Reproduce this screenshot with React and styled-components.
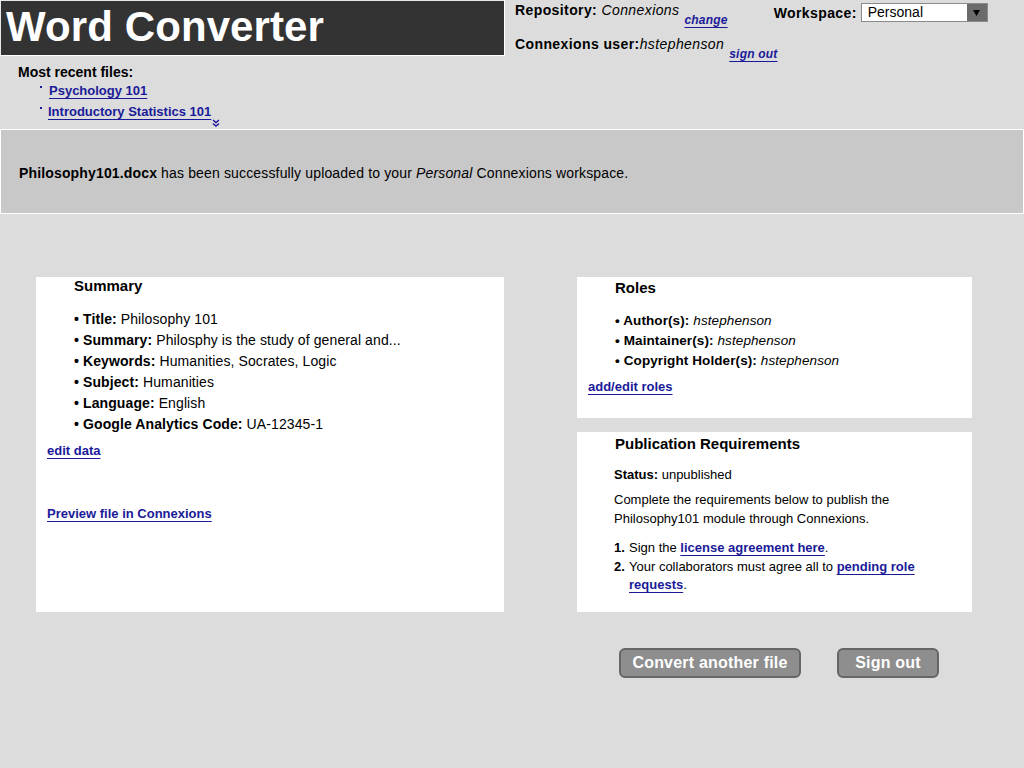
import React from "react";
import styled, { createGlobalStyle } from "styled-components";

const GlobalStyle = createGlobalStyle`
  html, body {
    margin: 0;
    padding: 0;
    background: #dcdcdc;
  }
  body {
    font-family: "Liberation Sans", Arial, Helvetica, sans-serif;
    color: #000;
  }
`;

const Page = styled.div`
  width: 1024px;
  min-height: 768px;
  background: #dcdcdc;
`;

const Top = styled.header`
  display: flex;
  gap: 10px;
`;

const LeftTop = styled.div`
  width: 505px;
`;

const TitleBar = styled.div`
  height: 54px;
  box-sizing: content-box;
  background: #333333;
  border: 1px solid #ffffff;
  border-top-color: #e8e8e8;
  border-left-color: #e8e8e8;
  display: flex;
  align-items: center;
  padding-left: 5px;

  h1 {
    margin: 0 0 3px 0;
    color: #ffffff;
    font-size: 42px;
    font-weight: bold;
    letter-spacing: 0.1px;
    line-height: 1;
  }
`;

const Recent = styled.div`
  padding: 8px 0 0 18px;
  height: 65px;

  h3 {
    margin: 0;
    font-size: 14px;
    line-height: 17px;
  }
`;

const RecentList = styled.ul`
  list-style: none;
  margin: 0;
  padding: 0 0 0 22px;
  position: relative;
`;

const RecentItem = styled.li`
  position: relative;
  padding-left: ${(p) => p.indent}px;
  height: 21px;
  line-height: 19px;
  font-size: 13px;

  &::before {
    content: "";
    position: absolute;
    left: 0;
    top: 5px;
    width: 2px;
    height: 2px;
    background: #1a1a99;
  }
`;

const Link = styled.a`
  color: #1a1a99;
  font-weight: bold;
  font-size: ${(p) => p.size || 13}px;
  font-style: ${(p) => (p.italic ? "italic" : "normal")};
  text-decoration: underline;
  text-underline-offset: 3px;
  text-decoration-thickness: 1px;
  cursor: pointer;
`;

const More = styled.span`
  position: absolute;
  left: 194px;
  top: 38px;
  display: flex;
  width: 8px;
  height: 8px;
`;

const RightTop = styled.div`
  padding-top: 2px;
  display: flex;
  flex-direction: column;
  gap: 9px;
`;

const InfoRow = styled.div`
  display: flex;
  align-items: flex-start;
  font-size: 14px;
  line-height: 16px;
  letter-spacing: 0.4px;
  white-space: nowrap;
`;

const LowLink = styled.span`
  margin-top: ${(p) => p.drop}px;
  margin-left: ${(p) => p.gap}px;
  line-height: 14px;
  letter-spacing: 0.2px;
`;

const Workspace = styled.div`
  display: flex;
  align-items: center;
  margin-left: 46px;
  margin-top: 2px;
  gap: 4px;
`;

const Select = styled.div`
  width: 125px;
  height: 17px;
  background: #ffffff;
  border: 1px solid #8a8a8a;
  display: flex;
  align-items: stretch;
  font-size: 14px;
  letter-spacing: 0;
  margin-top: -1px;

  span {
    flex: 1;
    padding-left: 6px;
    line-height: 17px;
  }
`;

const SelectArrow = styled.div`
  width: 20px;
  background: #6b6b6b;
  display: flex;
  align-items: center;
  justify-content: center;
`;

const Banner = styled.div`
  height: 80px;
  background: #c8c8c8;
  border: 1px solid #ffffff;
  display: flex;
  align-items: center;
  padding: 3px 0 0 18px;
  font-size: 14px;
  letter-spacing: 0.15px;
`;

const Main = styled.main`
  display: grid;
  grid-template-columns: 468px 395px;
  column-gap: 73px;
  padding: 63px 0 0 36px;
`;

const Card = styled.section`
  background: #ffffff;
  height: ${(p) => p.h}px;
  box-sizing: border-box;
  padding: ${(p) => p.top}px 11px 0 11px;
`;

const CardTitle = styled.h2`
  margin: 0 0 0 27px;
  font-size: 15px;
  line-height: 18px;
  font-weight: bold;
`;

const DataList = styled.ul`
  list-style: none;
  margin: ${(p) => p.mt}px 0 0 27px;
  padding: 0;
  font-size: ${(p) => p.fs}px;
  line-height: ${(p) => p.lh}px;
  letter-spacing: 0.1px;

  li::before {
    content: "• ";
    font-weight: bold;
  }
`;

const CardLink = styled.div`
  margin-top: ${(p) => p.mt}px;
  line-height: 16px;
`;

const RightCol = styled.div`
  display: flex;
  flex-direction: column;
  gap: 14px;
`;

const Status = styled.p`
  margin: 13px 0 0 26px;
  font-size: 13px;
  line-height: 18px;
`;

const Para = styled.p`
  margin: 6px 0 0 26px;
  font-size: 13px;
  line-height: 19px;
  width: 300px;
`;

const Steps = styled.ol`
  list-style: none;
  margin: 11px 0 0 26px;
  padding: 0;
  font-size: 13px;
  line-height: 18.5px;

  li {
    display: flex;
  }
  li > b {
    width: 15px;
    flex: none;
  }
  li > span {
    width: 300px;
  }
`;

const Buttons = styled.div`
  grid-column: 2;
  display: flex;
  gap: 36px;
  padding: 36px 0 0 42px;
`;

const Button = styled.button`
  height: 30px;
  width: ${(p) => p.w}px;
  background: #8e8e8e;
  border: 2px solid #666666;
  border-radius: 6px;
  color: #ffffff;
  font-family: "Liberation Sans", Arial, sans-serif;
  font-size: 16px;
  font-weight: bold;
  letter-spacing: 0.2px;
  padding: 0;
  cursor: pointer;
`;

export default function App() {
  return (
    <Page>
      <GlobalStyle />
      <Top>
        <LeftTop>
          <TitleBar>
            <h1>Word Converter</h1>
          </TitleBar>
          <Recent>
            <h3>Most recent files:</h3>
            <RecentList>
              <RecentItem indent={9}>
                <Link>Psychology 101</Link>
              </RecentItem>
              <RecentItem indent={8}>
                <Link>Introductory Statistics 101</Link>
              </RecentItem>
              <More>
                <svg width="8" height="8" viewBox="0 0 8 8">
                  <path d="M1 1 L4 3.5 L7 1 M1 4.5 L4 7 L7 4.5" fill="none" stroke="#1a1a99" strokeWidth="1.4" />
                </svg>
              </More>
            </RecentList>
          </Recent>
        </LeftTop>
        <RightTop>
          <InfoRow>
            <b>Repository:</b>&nbsp;<i>Connexions</i>
            <LowLink drop={10} gap={5}>
              <Link size={12} italic>change</Link>
            </LowLink>
            <Workspace>
              <b>Workspace:</b>
              <Select>
                <span>Personal</span>
                <SelectArrow>
                  <svg width="7" height="6" viewBox="0 0 7 6">
                    <path d="M0 0 H7 L3.5 6 Z" fill="#000" />
                  </svg>
                </SelectArrow>
              </Select>
            </Workspace>
          </InfoRow>
          <InfoRow>
            <b>Connexions user:</b>
            <i>hstephenson</i>
            <LowLink drop={10} gap={5}>
              <Link size={12} italic>sign out</Link>
            </LowLink>
          </InfoRow>
        </RightTop>
      </Top>

      <Banner>
        <span>
          <b>Philosophy101.docx</b> has been successfully uploaded to your <i>Personal</i> Connexions workspace.
        </span>
      </Banner>

      <Main>
        <Card h={335} top={0}>
          <CardTitle>Summary</CardTitle>
          <DataList mt={14} fs={14} lh={21}>
            <li><b>Title:</b> Philosophy 101</li>
            <li><b>Summary:</b> Philosphy is the study of general and...</li>
            <li><b>Keywords:</b> Humanities, Socrates, Logic</li>
            <li><b>Subject:</b> Humanities</li>
            <li><b>Language:</b> English</li>
            <li><b>Google Analytics Code:</b> UA-12345-1</li>
          </DataList>
          <CardLink mt={7}><Link>edit data</Link></CardLink>
          <CardLink mt={46}><Link>Preview file in Connexions</Link></CardLink>
        </Card>

        <RightCol>
          <Card h={141} top={2}>
            <CardTitle>Roles</CardTitle>
            <DataList mt={14} fs={13.5} lh={20}>
              <li><b>Author(s):</b> <i>hstephenson</i></li>
              <li><b>Maintainer(s):</b> <i>hstephenson</i></li>
              <li><b>Copyright Holder(s):</b> <i>hstephenson</i></li>
            </DataList>
            <CardLink mt={7}><Link>add/edit roles</Link></CardLink>
          </Card>
          <Card h={180} top={3}>
            <CardTitle>Publication Requirements</CardTitle>
            <Status><b>Status:</b> unpublished</Status>
            <Para>Complete the requirements below to publish the Philosophy101 module through Connexions.</Para>
            <Steps>
              <li>
                <b>1.</b>
                <span>Sign the <Link>license agreement here</Link>.</span>
              </li>
              <li>
                <b>2.</b>
                <span>
                  Your collaborators must agree all to <Link>pending role</Link>
                  <br />
                  <Link>requests</Link>.
                </span>
              </li>
            </Steps>
          </Card>
        </RightCol>

        <Buttons>
          <Button w={182}>Convert another file</Button>
          <Button w={102}>Sign out</Button>
        </Buttons>
      </Main>
    </Page>
  );
}
